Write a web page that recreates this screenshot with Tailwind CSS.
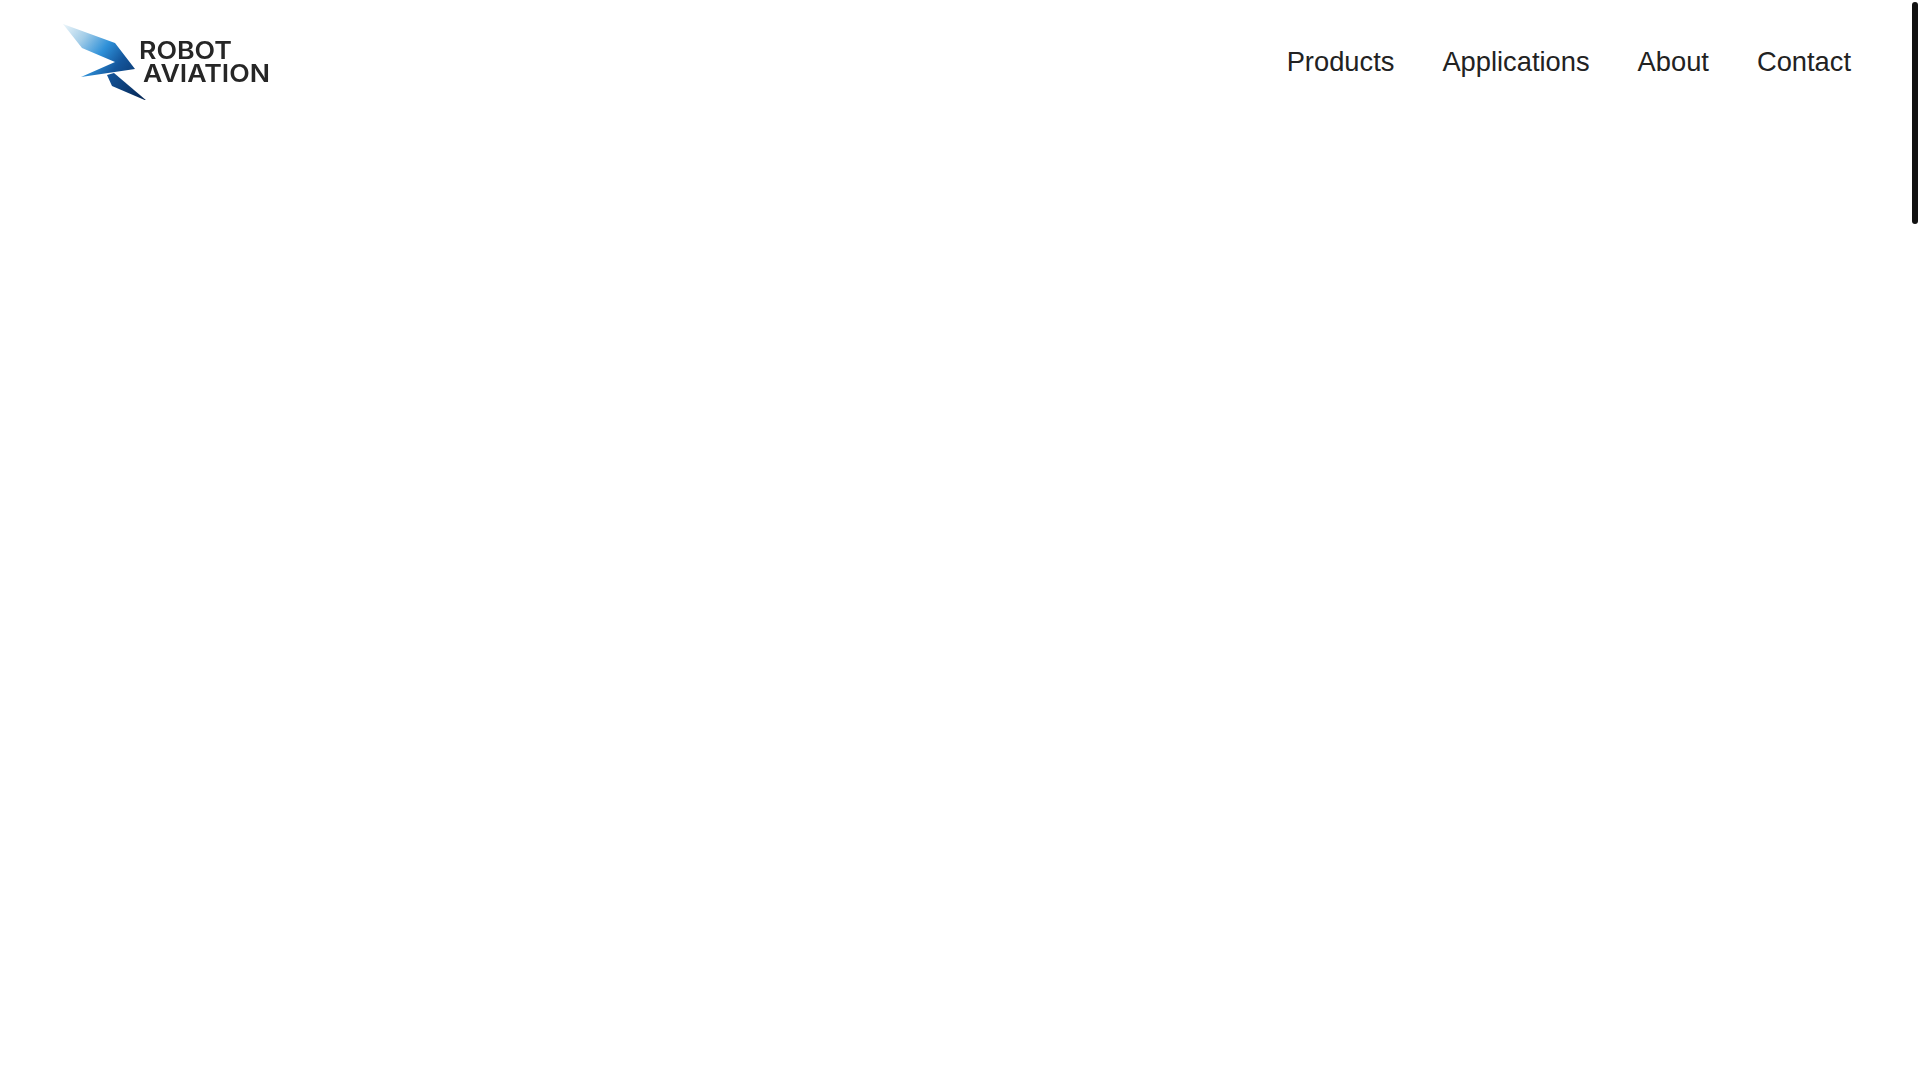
<!DOCTYPE html>
<html lang="en">
<head>
    <meta charset="UTF-8">
    <meta name="viewport" content="width=device-width, initial-scale=1.0">
    <script src="https://cdn.jsdelivr.net/npm/@tailwindcss/browser@4"></script>
    <title>Robot Aviation</title>
</head>
<body class="bg-white h-screen w-screen overflow-hidden font-['Liberation_Sans',sans-serif]">

    <header class="h-[122px] pl-[63px] pr-[69px] flex items-center justify-between">
        <a href="/" class="block">
            <svg class="block blur-[0.4px]" width="210" height="78" viewBox="63 22 210 78">
                <defs>
                    <linearGradient id="wing" gradientUnits="userSpaceOnUse" x1="66" y1="24" x2="135" y2="78">
                        <stop offset="0" stop-color="#e6f2f8"/>
                        <stop offset="0.25" stop-color="#a3cde8"/>
                        <stop offset="0.52" stop-color="#2e90d8"/>
                        <stop offset="0.75" stop-color="#14569c"/>
                        <stop offset="1" stop-color="#0b3a73"/>
                    </linearGradient>
                    <linearGradient id="tail" gradientUnits="userSpaceOnUse" x1="107" y1="74" x2="147" y2="101">
                        <stop offset="0" stop-color="#14569c"/>
                        <stop offset="1" stop-color="#04234f"/>
                    </linearGradient>
                </defs>
                <polygon fill="url(#wing)" points="63,24 115,43 135,69 81,77 115,62 82,48"/>
                <polygon fill="url(#tail)" points="107,75 114,73 147,101 112,86"/>
                <text x="139" y="59" textLength="93" lengthAdjust="spacingAndGlyphs" font-family="Inter" font-weight="600" font-size="24" fill="#262626">ROBOT</text>
                <text x="143" y="82" textLength="127" lengthAdjust="spacingAndGlyphs" font-family="Inter" font-weight="600" font-size="24" fill="#262626">AVIATION</text>
            </svg>
        </a>

        <nav class="flex items-center gap-[48px] pt-[2px] text-[27.3px] text-[#222]">
            <a href="#">Products</a>
            <a href="#">Applications</a>
            <a href="#">About</a>
            <a href="#">Contact</a>
        </nav>
    </header>

    <!-- overlay scrollbar -->
    <div class="absolute top-[2px] right-[2px] w-[6px] h-[222px] rounded-[3px] bg-[#111]"></div>

</body>
</html>
